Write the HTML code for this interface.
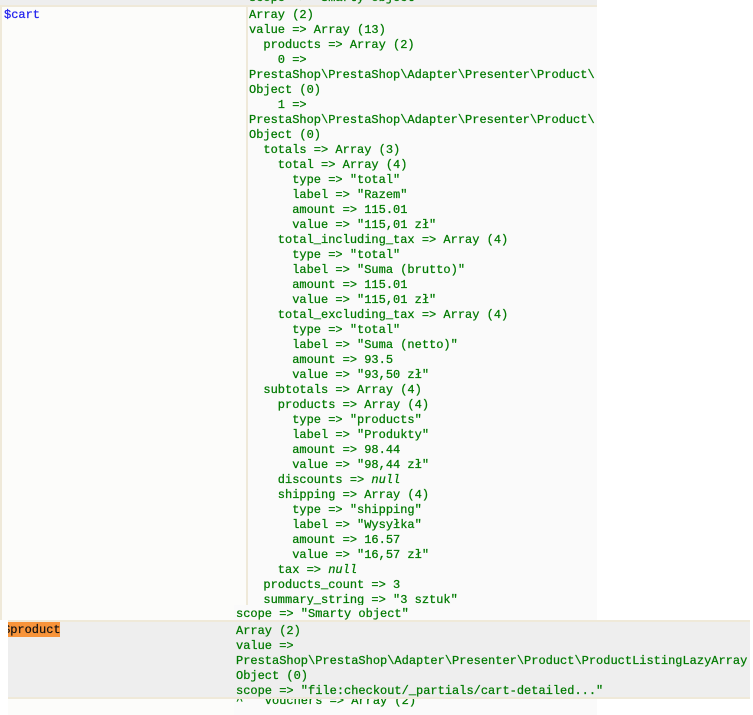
<!DOCTYPE html>
<html><head><meta charset="utf-8"><style>
html,body{margin:0;padding:0;background:#fff;width:753px;height:715px;overflow:hidden;position:relative}
div,pre{position:absolute;margin:0}
pre{font-family:"Liberation Mono","DejaVu Sans Mono",monospace;font-size:12px;line-height:15px;color:#007a00;white-space:pre;-webkit-text-stroke:0.25px #007a00}
</style></head><body>
<div style="left:0;top:0;width:597px;height:5px;background:#eee;overflow:hidden"><pre style="left:249px;top:-9px;">scope => "Smarty object"</pre></div>
<div style="left:0;top:5px;width:246px;height:615px;background:#fcfcfa;border-top:2px solid #efe9d9;border-left:2px solid #efe9d9;box-sizing:border-box"></div>
<div style="left:246px;top:5px;width:351px;height:600px;background:#fafafa;border-top:2px solid #efe9d9;border-left:2px solid #efe9d9;box-sizing:border-box"></div>
<pre style="left:4px;top:8px;color:#2222ee;-webkit-text-stroke:0.25px #2222ee">$cart</pre>
<pre style="left:249px;top:8px;">Array (2)
value => Array (13)
  products => Array (2)
    0 =>
PrestaShop\PrestaShop\Adapter\Presenter\Product\
Object (0)
    1 =>
PrestaShop\PrestaShop\Adapter\Presenter\Product\
Object (0)
  totals => Array (3)
    total => Array (4)
      type => "total"
      label => "Razem"
      amount => 115.01
      value => "115,01 zł"
    total_including_tax => Array (4)
      type => "total"
      label => "Suma (brutto)"
      amount => 115.01
      value => "115,01 zł"
    total_excluding_tax => Array (4)
      type => "total"
      label => "Suma (netto)"
      amount => 93.5
      value => "93,50 zł"
  subtotals => Array (4)
    products => Array (4)
      type => "products"
      label => "Produkty"
      amount => 98.44
      value => "98,44 zł"
    discounts => <i>null</i>
    shipping => Array (4)
      type => "shipping"
      label => "Wysyłka"
      amount => 16.57
      value => "16,57 zł"
    tax => <i>null</i>
  products_count => 3
  summary_string => "3 sztuk"</pre>
<div style="left:234px;top:605px;width:363px;height:15px;background:#fafafa"></div>
<pre style="left:236px;top:607px;">scope => "Smarty object"</pre>
<div style="left:8px;top:620px;width:742px;height:79px;background:#eee;border-top:2px solid #efe9d9;border-bottom:2px solid #efe9d9;box-sizing:border-box;overflow:hidden">
<div style="left:0;top:-1px;width:52px;height:16px;background:#f8943a"></div>
<pre style="left:-5px;top:1px;color:#111;-webkit-text-stroke:0.2px #111">$product</pre>
</div>
<pre style="left:236px;top:624px;">Array (2)
value =>
PrestaShop\PrestaShop\Adapter\Presenter\Product\ProductListingLazyArray
Object (0)
scope => "file:checkout/_partials/cart-detailed..."</pre>
<div style="left:8px;top:699px;width:226px;height:16px;background:#fcfcfa"></div>
<div style="left:234px;top:699px;width:363px;height:16px;background:#fafafa;overflow:hidden"><pre style="left:2px;top:-5px;">^   vouchers => Array (2)</pre></div>
</body></html>
